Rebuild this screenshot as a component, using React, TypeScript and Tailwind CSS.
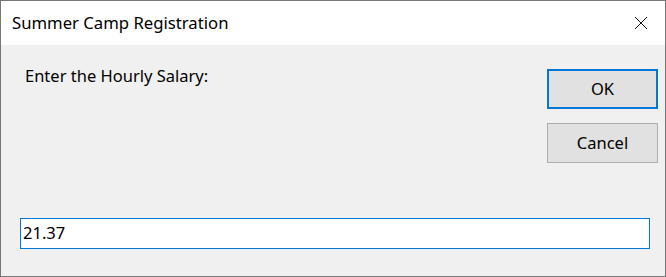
export default function App() {
  return (
    <div
      className="w-[666px] h-[277px] flex flex-col border border-[#777777] bg-[#f0f0f0] text-black"
      style={{ fontFamily: '"Noto Sans", "Open Sans", sans-serif' }}
    >
      {/* Title bar */}
      <div className="h-[44px] bg-white flex items-center justify-between pl-[11px] pr-[17px] shrink-0">
        <span className="text-[16.7px] text-[#000000]">Summer Camp Registration</span>
        <svg width="14" height="14" viewBox="0 0 14 14" className="text-[#111]">
          <path d="M1 1L13 13M13 1L1 13" stroke="currentColor" strokeWidth="1" />
        </svg>
      </div>

      {/* Body */}
      <div className="flex-1 flex flex-col pl-[19px]">
        <div className="flex justify-between pt-[24px] pr-[7px]">
          <p className="pl-[5px] text-[16.5px] leading-[14px]">Enter the Hourly Salary:</p>
          <div className="flex flex-col gap-[14px]">
            <button className="w-[111px] h-[40px] bg-[#e1e1e1] border-2 border-[#0078d7] text-[16.5px]">
              OK
            </button>
            <button className="w-[111px] h-[40px] bg-[#e1e1e1] border border-[#adadad] text-[16.5px]">
              Cancel
            </button>
          </div>
        </div>
        <div className="mt-[55px] w-[630px] h-[31px] bg-white border border-[#0078d7] flex items-center px-[2px] text-[16.5px]">
          21.37
        </div>
      </div>
    </div>
  );
}
